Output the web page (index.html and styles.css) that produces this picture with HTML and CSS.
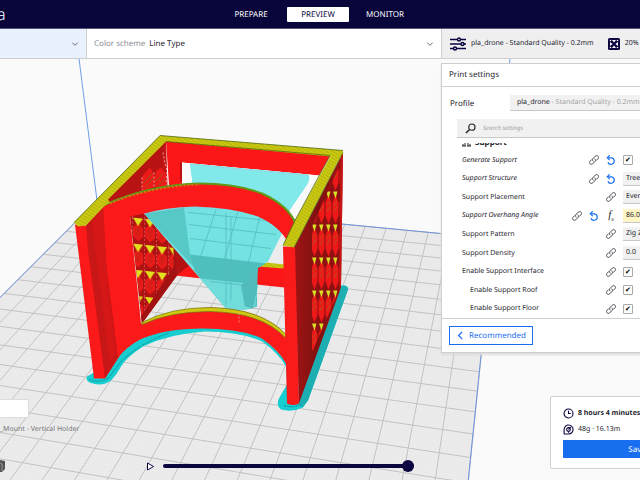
FILE: index.html
```html
<!DOCTYPE html>
<html lang="en">
<head>
    <meta charset="UTF-8">
    <meta name="viewport" content="width=device-width, initial-scale=1.0">
    <title>Print preview</title>
    <link rel="stylesheet" href="styles.css">
</head>
<body>
    <!-- Shared icons -->
    <svg class="defs" aria-hidden="true">
        <symbol id="link" viewBox="0.5 0.5 11 11">
            <g fill="none" stroke="currentColor" stroke-width="1.1" stroke-linecap="round">
                <path d="M5 7.2C4 6.200 4.200 5 5 4.200L7.400 1.800C8.300 .9 9.500 1 10.300 1.800S11.200 3.800 10.300 4.700L8.700 6.300"/>
                <path d="M7 4.800C8 5.800 7.800 7 7 7.800L4.600 10.200C3.700 11.100 2.500 11 1.700 10.200S.8 8.200 1.700 7.300L3.300 5.700"/>
            </g>
        </symbol>
        <symbol id="reset" viewBox="0.5 0.5 11 11">
            <g fill="none" stroke="#196ef0" stroke-width="1.300">
                <path d="M2.500 3.600H6.500A3.600 3.600 0 1 1 2.600 8.400"/>
                <path d="M4.600 .8L1.900 3.600L4.600 6.200"/>
            </g>
        </symbol>
        <symbol id="chevron" viewBox="0 0 8 8">
            <path d="M1.300 2.600L4 5.300L6.700 2.600" fill="none" stroke="#6b6b78" stroke-width="1"/>
        </symbol>
    </svg>

    <header class="topbar">
        <span class="logo">a</span>
        <nav class="stages">
            <a href="#prepare">PREPARE</a>
            <a href="#preview" class="active">PREVIEW</a>
            <a href="#monitor">MONITOR</a>
        </nav>
    </header>

    <div class="toolbar">
        <button class="printer" aria-label="Printer"><svg class="chev"><use href="#chevron"/></svg></button>
        <button class="scheme">
            <span class="muted">Color scheme</span>
            <span>Line Type</span>
            <svg class="chev"><use href="#chevron"/></svg>
        </button>
        <button class="summary">
            <svg class="sliders" viewBox="0 0 16 14">
                <g fill="#efeff0" stroke="#0b0540" stroke-width="1.400">
                    <path d="M0 2.500H16M0 7H16M0 11.500H16"/>
                    <circle cx="9" cy="2.500" r="1.500"/>
                    <circle cx="12.500" cy="7" r="1.500"/>
                    <circle cx="5" cy="11.500" r="1.500"/>
                </g>
            </svg>
            <span>pla_drone - Standard Quality - 0.2mm</span>
            <svg class="infill" viewBox="0 0 12 12">
                <rect width="12" height="12" rx="1.500" fill="#0b0540"/>
                <g fill="#fff">
                    <path d="M4 2H8L6 4.600ZM4 10H8L6 7.400ZM2 4V8L4.600 6ZM10 4V8L7.400 6Z"/>
                    <circle cx="2.500" cy="2.500" r=".8"/><circle cx="9.500" cy="2.500" r=".8"/>
                    <circle cx="2.500" cy="9.500" r=".8"/><circle cx="9.500" cy="9.500" r=".8"/>
                </g>
            </svg>
            <span>20%</span>
        </button>
    </div>

    <main class="workspace">
        <svg class="scene" viewBox="0 58 640 422" preserveAspectRatio="xMidYMid slice" role="img" aria-label="Sliced model on the build plate">
            <defs>
                <pattern id="cells" width="12" height="26" patternUnits="userSpaceOnUse" patternTransform="translate(132 217) skewY(6)">
                    <rect width="12" height="26" fill="#b01212"/>
                    <path d="M6 5L11 10V18L6 23L1 18V10Z" fill="#ee1a1a"/>
                    <path d="M3 13L8 8M3 17L9 10M5 19L9 14" stroke="#8c2a10" stroke-width=".8"/>
                    <path d="M1 0H11L6 8Z" fill="#e2e01c"/>
                    <path d="M0 0V26" stroke="#e9a0a0" stroke-width=".8" stroke-dasharray="2 2"/>
                </pattern>
                <pattern id="sideCells" width="7" height="33" patternUnits="userSpaceOnUse" patternTransform="translate(311 224)">
                    <rect width="7" height="33" fill="#8e1010"/>
                    <path d="M3.500 3L6.500 11V24L3.500 32L.5 24V11Z" fill="#ee1818"/>
                    <path d="M2 14L5 10M2 20L5 15" stroke="#a3601a" stroke-width=".8"/>
                    <path d="M1 0H5.500L3.500 7Z" fill="#d9e024"/>
                </pattern>
                <pattern id="rim" width="3" height="3" patternUnits="userSpaceOnUse" patternTransform="rotate(30)">
                    <rect width="3" height="3" fill="#cac80f"/>
                    <path d="M0 0H3" stroke="#a6ac10" stroke-width="1.200"/>
                </pattern>
                <linearGradient id="side" x1="0" x2="1">
                    <stop offset="0" stop-color="#a01414"/>
                    <stop offset=".5" stop-color="#7e1010"/>
                    <stop offset="1" stop-color="#a81212"/>
                </linearGradient>
            </defs>

            <path d="M97 200L493 238L455 620L-400 697Z" fill="#ececec"/>
            <path id="fineGrid" fill="none" stroke="#e7e7e7" stroke-width=".5"/>
            <path id="grid" fill="none" stroke="#c2c2c2" stroke-width="1"/>
            <path d="M79 58L97 200M510 58L493 238" fill="none" stroke="#6f9de8"/>
            <path d="M-100 397L97 200L493 238L468 482" fill="none" stroke="#6f93dc"/>

            <!-- Brim -->
            <path d="M94 372L87 376Q85 381 93 383Q103 386 111 380Q117 374 121 366Q126 357 143 346Q170 333 205 331Q240 331 262 341Q278 352 286 366L287 384L280 396Q275 404 281 409Q292 412 303 407L308 400L348 289Q348 284 341 285L300 300L286 352L240 322H180L120 345Z" fill="#16cdd0"/>
            <path d="M299 404L341 286Q348 284 348 289L308 400L302 407Z" fill="#1caeb0"/>
            <path d="M89 379Q98 383 108 378M108 378L122 360Q140 343 170 332M284 405Q292 408 301 404" fill="none" stroke="#0b8f96" stroke-dasharray="2 1"/>

            <!-- Back wall -->
            <path d="M166 140L331 154L319 175L182 162V182L190 262L284 266V287L202 278L175 275Z" fill="#fb1717"/>
            <path d="M182 162V182L190 262L258 265L290 208L319 175Z" fill="#fafafa"/>
            <path d="M188 209L284 219L284 264L190 256Z" fill="#ececec"/>
            <path d="M258 261L284 264V268L258 266Z" fill="url(#rim)"/>

            <!-- Left wall, inner side -->
            <path d="M166 140L103 204L110 225L168 200Z" fill="#c41414"/>
            <path d="M166 141L103 203L130 196L162 185L163 152Z" fill="#b81313"/>
            <path d="M142 190L142 176L150 167L154 174V187ZM154 180L156 171L161 167L167 175V185L155 187Z" fill="#ee1919"/>
            <path d="M143 183L152 173M145 187L154 177M156 181L163 173M158 185L165 178" stroke="#7a6a12" stroke-width=".8"/>
            <path d="M163 152L165 163L167 170L166 184M142 177V190M154 172V186" fill="none" stroke="#eec3c3" stroke-width=".8" stroke-dasharray="2 2"/>
            <path d="M181 162V181" stroke="#8c1010" stroke-width="1.200"/>
            <path d="M130 214L182 205L190 264L177 275L142 323Z" fill="#b41212"/>
            <path d="M130 214L172 206L175 272L142 320Z" fill="url(#cells)"/>
            <path d="M173 232L177 275L142 323L141 316L174 266Z" fill="#a31212"/>

            <!-- Support -->
            <path d="M190 163L308 174Q311 178 307 184L290 209L284 229L268 261L257 268V306Q242 312 226 308L144 213L195 200Z" fill="#74e2e2"/>
            <path d="M190 163L308 174Q311 178 307 184L290 209L195 200Z" fill="#82e9ea"/>
            <path d="M144 213L184 207L190 254L197 270Z" fill="#56c8c5"/>
            <path d="M190 254L266 263L257 268V306Q242 312 226 308L195 271Z" fill="#4fbfbd"/>
            <path d="M200 278L258 284L255 306Q242 312 226 308Z" fill="#72dcdb"/>
            <path d="M258 267L257 290L253 308L245 306L241 285Z" fill="#52bcbc"/>
            <path d="M188 212L279 221M189 224L276 234M190 238L271 248M216 209L200 258M238 211L224 260M260 216L248 263M210 281L256 286" fill="none" stroke="#4fb4b8" stroke-width=".7"/>
            <path d="M226 212V305M231 217V300" stroke="#55bdc0" stroke-width="2" opacity=".4"/>
            <path d="M190 164L308 175M145 213Q190 203 240 210" fill="none" stroke="#a9b9e0" stroke-width="1" stroke-dasharray="1 2"/>

            <!-- Front arch and left column -->
            <path d="M86 225L103 204Q150 184 200 183Q236 183 262 193Q288 205 295 222L288 242Q280 226 258 216Q232 207 195 206Q165 207 144 213L130 216L141 323Q170 308 210 307Q262 308 286 334V363Q280 351 262 338Q240 328 203 328Q165 328 140 339Q124 348 118 358L105 378H94L75 224Z" fill="#fb1919"/>
            <path d="M86 225L103 204L106 262L118 357L105 378L88 250Z" fill="#c91616"/>
            <path d="M92 222L103 206L108 290L116 352L110 364Z" fill="#d61717"/>
            <path d="M142 322Q170 307 210 307Q262 308 286 334L285 337Q262 312 210 311Q170 311 142 324Z" fill="#cfc812" stroke="#6f7f10" stroke-width=".7"/>
            <path d="M103 205Q150 184 200 183Q236 183 262 193Q288 205 295 222" fill="none" stroke="#5f9a16" stroke-width="2"/>
            <path d="M110 203Q150 186 200 184" fill="none" stroke="#d87414" stroke-width="2" stroke-dasharray="2 2"/>
            <path d="M239 312V323" stroke="#f7a0a0" stroke-width=".8" stroke-dasharray="2 2"/>

            <!-- Right wall -->
            <path d="M294 247L343 152L341 287L299 403Z" fill="url(#side)"/>
            <path d="M340 164L312 226V352L341 285Z" fill="url(#sideCells)"/>
            <path d="M342 153L340 286" stroke="#c81616" stroke-width="2"/>
            <path d="M283 246H295L299 403Q293 406 287 403Z" fill="#fb1a1a"/>

            <!-- Top rim -->
            <path d="M160 135L343 150L343 154L331 156L166 141Z" fill="url(#rim)"/>
            <path d="M160 135L74 222L78 226L86 225L105 205L110 202L108 199L167 140Z" fill="url(#rim)"/>
            <path d="M343 151L331 155L295 220L283 245L294 247Z" fill="url(#rim)"/>
            <path d="M74 222L160 135L343 150M166 141L330 155L295 220L283 245M343 152L294 247" fill="none" stroke="#4f6b12" stroke-width=".8"/>
        </svg>

        <section class="panel">
            <h2>Print settings</h2>
            <div class="profile">
                <label for="profile">Profile</label>
                <button id="profile"><span>pla_drone</span> - Standard Quality - 0.2mm</button>
            </div>
            <div class="search">
                <svg viewBox="0 0 12 12"><circle cx="7.500" cy="4.500" r="3.400" fill="none" stroke="#222" stroke-width="1.300"/><path d="M5 7L1 11" stroke="#222" stroke-width="1.600"/></svg>
                <input type="text" placeholder="Search settings" aria-label="Search settings">
            </div>
            <div class="category">
                <svg viewBox="0 0 9 4"><path d="M1 1V3M3 0V3M6 0V3M8 1V3M0 3H4M5 3H9" fill="none" stroke="#26262e"/></svg>
                <span>Support</span>
            </div>
            <div class="settings">
                <div class="row changed">
                    <label for="generate">Generate Support</label>
                    <svg><use href="#link"/></svg><svg><use href="#reset"/></svg>
                    <input type="checkbox" id="generate" checked>
                </div>
                <div class="row changed">
                    <label for="structure">Support Structure</label>
                    <svg><use href="#link"/></svg><svg><use href="#reset"/></svg>
                    <select id="structure"><option>Tree</option></select>
                </div>
                <div class="row">
                    <label for="placement">Support Placement</label>
                    <svg><use href="#link"/></svg>
                    <select id="placement"><option>Everywhere</option></select>
                </div>
                <div class="row changed">
                    <label for="angle">Support Overhang Angle</label>
                    <svg><use href="#link"/></svg><svg><use href="#reset"/></svg>
                    <span class="fx">f<sub>x</sub></span>
                    <input type="text" class="warn" id="angle" value="86.0">
                </div>
                <div class="row">
                    <label for="pattern">Support Pattern</label>
                    <svg><use href="#link"/></svg>
                    <select id="pattern"><option>Zig Zag</option></select>
                </div>
                <div class="row">
                    <label for="density">Support Density</label>
                    <svg><use href="#link"/></svg>
                    <input type="text" id="density" value="0.0">
                </div>
                <div class="row">
                    <label for="interface">Enable Support Interface</label>
                    <svg><use href="#link"/></svg>
                    <input type="checkbox" id="interface" checked>
                </div>
                <div class="row child">
                    <label for="roof">Enable Support Roof</label>
                    <svg><use href="#link"/></svg>
                    <input type="checkbox" id="roof" checked>
                </div>
                <div class="row child">
                    <label for="floor">Enable Support Floor</label>
                    <svg><use href="#link"/></svg>
                    <input type="checkbox" id="floor" checked>
                </div>
            </div>
            <div class="actions">
                <button class="recommended">
                    <svg viewBox="0 0 8 8"><path d="M5.500 .8L2.300 4L5.500 7.200" fill="none" stroke="#196ef0" stroke-width="1.100"/></svg>
                    Recommended
                </button>
            </div>
        </section>

        <section class="job">
            <div class="time">
                <svg viewBox="0 0 12 12"><g fill="none" stroke="#0b0540" stroke-width="1.200"><circle cx="6" cy="6" r="4.900"/><path d="M6 3V6H8.500"/></g></svg>
                8 hours 4 minutes
            </div>
            <div class="material">
                <svg viewBox="0 0 12 12"><g fill="none" stroke="#0b0540" stroke-width="1.200"><path d="M1.200 11V6A4.900 4.900 0 1 1 6 10.900H1"/><circle cx="6" cy="6" r="2"/><path d="M6 6L8.500 3.500M6 8V9.500"/></g></svg>
                48g · 16.13m
            </div>
            <button class="save">Save to Disk</button>
        </section>

        <div class="stage-footer">
            <div class="object-box"></div>
            <p class="object-name">_Mount - Vertical Holder</p>
            <div class="playback">
                <svg class="cube" viewBox="0 0 5 12"><path d="M0 0L5 1V9L2 12H0Z" fill="#555"/><path d="M0 3L2 4V11" fill="none" stroke="#aaa" stroke-width=".8"/></svg>
                <button class="play" aria-label="Play"><svg viewBox="0 0 9 9"><path d="M1.500 1L7.500 4.500L1.500 8Z" fill="#fff" stroke="#0b0540"/></svg></button>
                <input type="range" min="0" max="100" value="100" aria-label="Layer path">
            </div>
        </div>
    </main>

    <script>
        // Build plate: far left corner and the two vanishing points
        const corner = [97, 200];
        const across = [-3430, -140];
        const along = [543, -247];
        const cols = 20;
        const rows = 18;
        const a = -0.101 / cols;
        const b = -0.0215;

        function project(u, v) {
            const w = 1 + u * a + v * b;
            const x = (corner[0] + u * a * across[0] + v * b * along[0]) / w;
            const y = (corner[1] + u * a * across[1] + v * b * along[1]) / w;
            return x.toFixed(1) + " " + y.toFixed(1);
        }

        function gridPath(step) {
            let d = "";
            for (let u = 0; u <= cols; u += step) {
                d += "M" + project(u, 0) + "L" + project(u, rows);
            }
            for (let v = 0; v <= rows; v += step) {
                d += "M" + project(0, v) + "L" + project(cols, v);
            }
            return d;
        }

        document.getElementById("grid").setAttribute("d", gridPath(1));
        document.getElementById("fineGrid").setAttribute("d", gridPath(0.125));
    </script>
</body>
</html>
```
FILE: styles.css
```css
* {
    box-sizing: border-box;
}
body {
    margin: 0;
    height: 100vh;
    display: flex;
    flex-direction: column;
    overflow: hidden;
    font-family: "Noto Sans", sans-serif;
    font-size: 7px;
    text-rendering: geometricPrecision;
    color: #26262e;
    background: #fafafa;
}
button, input, select {
    font: inherit;
    color: inherit;
    text-rendering: inherit;
    border: none;
    border-radius: 0;
    margin: 0;
    padding: 0;
    background: none;
}
a {
    text-decoration: none;
}
.defs {
    position: absolute;
    width: 0;
    height: 0;
}

/* Top bar */
.topbar {
    display: grid;
    grid-template-columns: 1fr auto 1fr;
    align-items: center;
    height: 29px;
    flex: none;
    padding-right: 4px;
    background: #08053b;
    border-bottom: 1px solid #55557a;
    color: white;
}
.logo {
    font-size: 16px;
    font-weight: 300;
    line-height: 24px;
    margin-left: -3px;
}
.stages {
    display: flex;
    gap: 5px;
}
.stages a {
    width: 62px;
    line-height: 15px;
    font-size: 8px;
    text-align: center;
    color: white;
    border-radius: 1px;
}
.stages .active {
    background: white;
    color: #08053b;
}

/* Toolbar */
.toolbar {
    display: grid;
    grid-template-columns: 87px 1fr 198px;
    height: 30px;
    flex: none;
    background: white;
    border-bottom: 1px solid #cfcfcf;
    font-size: 8px;
}
.toolbar button {
    display: flex;
    align-items: center;
    gap: 4px;
    min-width: 0;
    overflow: hidden;
    white-space: nowrap;
    border-right: 1px solid #cfcfcf;
}
.toolbar .chev {
    width: 8px;
    height: 8px;
    flex: none;
    margin-left: auto;
}
.toolbar .printer {
    background: #e8f1fd;
    padding-right: 7px;
}
.toolbar .scheme {
    padding: 0 7px;
}
.muted {
    color: #8d8d96;
}
.toolbar .summary {
    background: #efeff0;
    padding-left: 8px;
    gap: 5px;
    border-right: none;
    font-size: 7px;
}
.sliders {
    width: 16px;
    height: 14px;
    flex: none;
}
.infill {
    width: 12px;
    height: 12px;
    flex: none;
    margin-left: 9px;
}

/* Workspace */
.workspace {
    position: relative;
    flex: 1;
    min-height: 0;
    overflow: hidden;
    display: flex;
    flex-direction: column;
    justify-content: flex-end;
}
.scene {
    position: absolute;
    inset: 0;
    width: 100%;
    height: 100%;
}

/* Print settings */
.panel {
    position: absolute;
    top: 4px;
    left: calc(100% - 199px);
    width: 290px;
    background: white;
    border: 1px solid #cfcfcf;
    box-shadow: 0 2px 2px #dcdcdc;
}
.panel h2 {
    margin: 0;
    padding-left: 7px;
    font-size: 8px;
    font-weight: normal;
    line-height: 22px;
    border-bottom: 1px solid #cfcfcf;
}
.profile {
    display: flex;
    align-items: center;
    padding: 8px 0 8px 8px;
}
.profile label {
    width: 60px;
    font-size: 8px;
}
.profile button {
    flex: 1;
    height: 16px;
    padding-left: 7px;
    text-align: left;
    background: #f1f1f1;
    border-bottom: 1px solid #c8c8c8;
    color: #a5a5a5;
}
.profile span {
    color: #26262e;
}
.search {
    display: flex;
    align-items: center;
    gap: 7px;
    height: 19px;
    margin-left: 15px;
    padding-left: 8px;
    background: #f1f1f1;
    border-bottom: 1px solid #c8c8c8;
}
.search svg {
    width: 11px;
    height: 11px;
}
.search input {
    flex: 1;
    font-size: 6px;
    font-style: italic;
}
.search input::placeholder {
    color: #a0a0a0;
}
.category {
    display: flex;
    align-items: flex-start;
    gap: 4px;
    height: 13px;
    padding: 5px 0 0 20px;
    font-size: 8px;
    font-weight: bold;
}
.category svg {
    width: 9px;
    height: 4px;
}
/* Heading is half scrolled under the search box */
.category span {
    display: flex;
    align-items: flex-end;
    height: 5px;
    overflow: hidden;
    line-height: 11px;
}
.settings {
    display: grid;
    grid-auto-rows: 1fr;
    height: 35vh;
    padding-left: 20px;
    border-bottom: 1px solid #cfcfcf;
}
.row {
    display: flex;
    align-items: center;
    gap: 7px;
}
.row label {
    flex: 1;
    white-space: nowrap;
}
.row svg {
    width: 10px;
    height: 10px;
    flex: none;
    color: #4a4a52;
}
.row input, .row select {
    flex: none;
    width: 90px;
    height: 14px;
    margin-right: 17px;
    padding-left: 3px;
    appearance: none;
    background: #f1f1f1;
    border-bottom: 1px solid #c8c8c8;
}
.row input[type="checkbox"] {
    display: grid;
    place-items: center;
    width: 10px;
    height: 10px;
    margin-right: 97px;
    padding: 0;
    background: white;
    border: 1px solid #a8a8b0;
    border-radius: 1px;
}
.row input[type="checkbox"]:checked::before {
    content: "✔";
    font: 7px/8px "DejaVu Sans", sans-serif;
    color: black;
}
.row .warn {
    background: #fff5c4;
}
.changed label {
    font-style: italic;
}
.child {
    padding-left: 8px;
}
.fx {
    width: 10px;
    font: italic 11px/10px "Liberation Serif", serif;
    text-align: center;
}
.fx sub {
    font-size: 6px;
    line-height: 1px;
}
.actions {
    padding: 7px;
}
.recommended {
    display: flex;
    align-items: center;
    gap: 4px;
    height: 19px;
    padding: 0 6px;
    border: 1px solid #196ef0;
    color: #196ef0;
    font-size: 8px;
}
.recommended svg {
    width: 9px;
    height: 9px;
}

/* Job card */
.job {
    position: absolute;
    left: calc(100% - 90px);
    bottom: 11px;
    width: 202px;
    padding: 10px 12px;
    background: white;
    border: 1px solid #cfcfcf;
    border-radius: 2px;
}
.time, .material {
    display: flex;
    align-items: center;
    gap: 4px;
    height: 12px;
    white-space: nowrap;
}
.time {
    font-weight: bold;
}
.material {
    margin: 4px 0 5px;
}
.job svg {
    width: 11px;
    height: 11px;
    flex: none;
}
.save {
    width: 100%;
    height: 18px;
    background: #196ef0;
    color: white;
    font-size: 8px;
}

/* Lower left controls */
.stage-footer {
    position: relative;
    padding-bottom: 8px;
}
.object-box {
    width: 29px;
    height: 19px;
    background: white;
    border: 1px solid #dcdcdc;
    border-left: none;
}
.object-name {
    margin: 6px 0 25px;
    line-height: 11px;
    color: #77777c;
}
.playback {
    display: flex;
    align-items: center;
}
.cube {
    width: 5px;
    height: 12px;
}
.play {
    display: flex;
    margin: 0 8px 0 141px;
}
.play svg {
    width: 9px;
    height: 9px;
}
.playback input {
    appearance: none;
    width: 39.2%;
    height: 4px;
    border-radius: 2px;
    background: #0b0540;
}
.playback input::-webkit-slider-thumb {
    appearance: none;
    width: 12px;
    height: 12px;
    border-radius: 50%;
    background: #0b0540;
}
```
